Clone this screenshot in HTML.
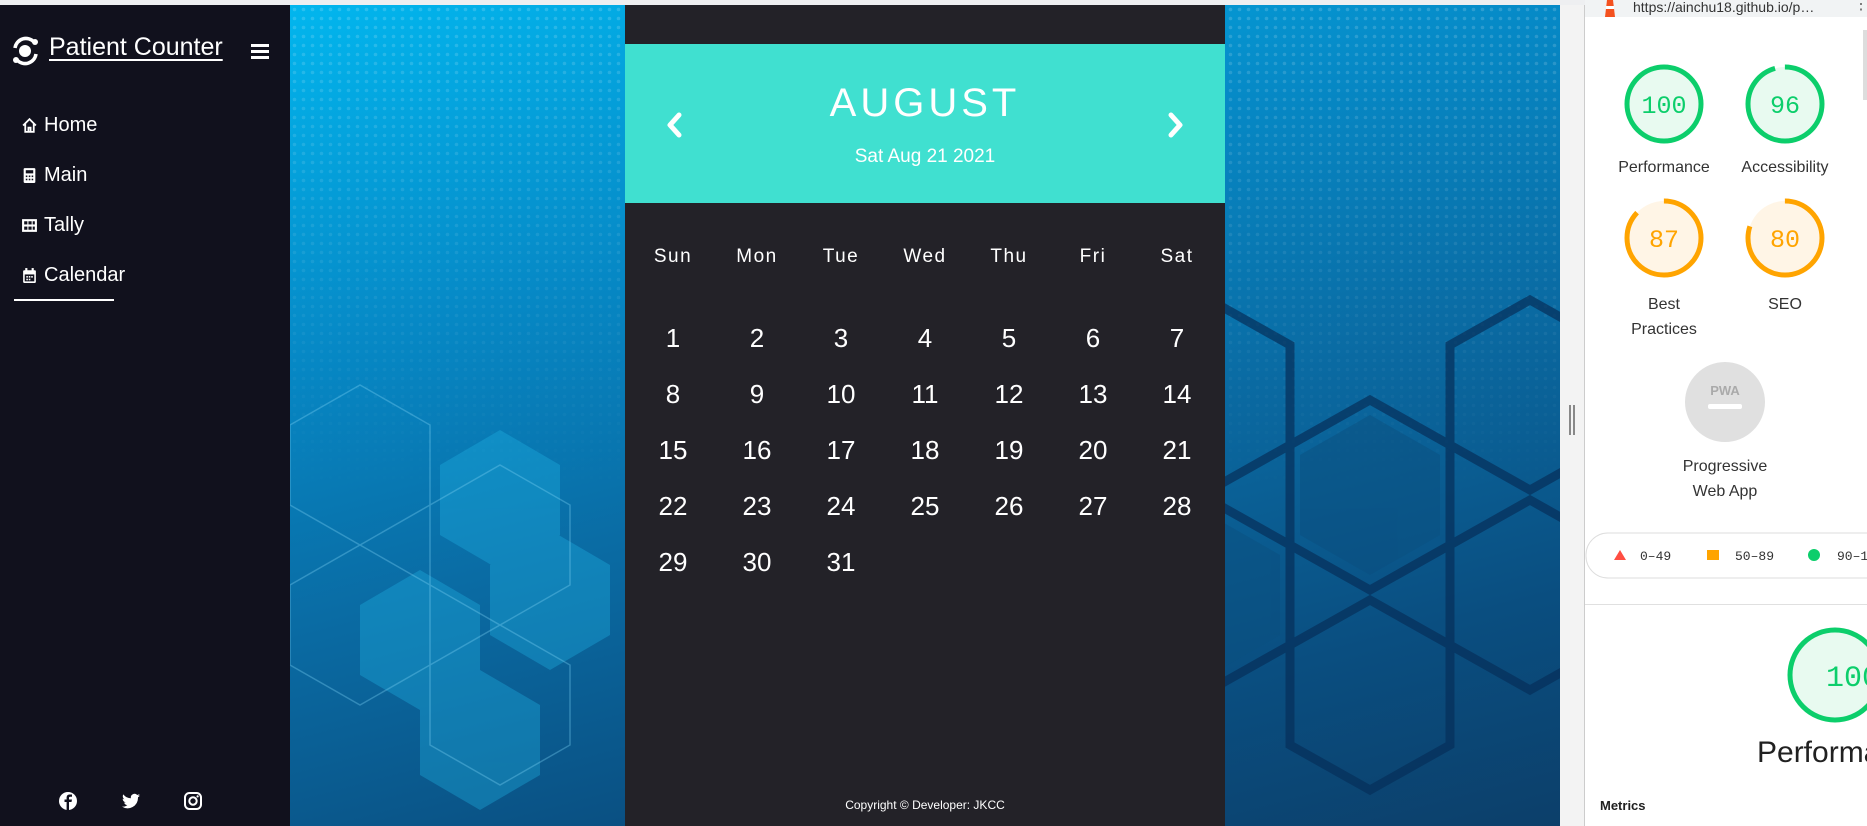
<!DOCTYPE html>
<html><head><meta charset="utf-8"><style>
*{margin:0;padding:0;box-sizing:border-box}
body{width:1867px;height:826px;overflow:hidden;position:relative;background:#fff;font-family:"Liberation Sans",sans-serif}
#top{position:absolute;left:0;top:0;width:1585px;height:5px;background:#eeeff1}
#side{position:absolute;left:0;top:5px;width:290px;height:821px;background:#11111d;color:#fff}
.logo{position:absolute;left:10px;top:30px}
.title{position:absolute;left:49px;top:28px;font-size:25px;text-decoration:underline;text-underline-offset:4px}
.ham{position:absolute;left:251px;top:39px;width:18px}
.ham i{display:block;height:3px;background:#fff;margin-bottom:3px}
.nav{position:absolute;left:21px;font-size:20px;display:flex;align-items:center;gap:6px}
.nav svg{width:17px;height:17px}
.uline{position:absolute;left:14px;top:294px;width:100px;height:2px;background:#fff}
.soc{position:absolute;top:786px;width:20px;height:20px}
#bg{position:absolute;left:290px;top:5px;width:1270px;height:821px;background:linear-gradient(165deg,#02b6ee 0%,#0689c6 30%,#0a6aa2 55%,#0a4e80 80%,#0c3f6a 100%);overflow:hidden}
#cal{position:absolute;left:625px;top:5px;width:600px;height:821px;background:#232228;color:#fff;font-family:"Liberation Sans",sans-serif}
#head{position:absolute;left:0;top:39px;width:600px;height:159px;background:#40e0d0;text-align:center}
.month{position:absolute;left:0;right:0;top:37px;font-size:40px;letter-spacing:4px;font-weight:normal}
.date{position:absolute;left:0;right:0;top:102px;font-size:19px}
.arr{position:absolute;top:66px;width:24px;height:30px}
.grid{position:absolute;left:6px;width:588px;display:grid;grid-template-columns:repeat(7,84px);text-align:center}
.dow{top:241px;font-size:19px;letter-spacing:1.5px}
.days{top:320px;font-size:26px;row-gap:29px;line-height:27px}
.copy{position:absolute;left:0;right:0;top:793px;text-align:center;font-size:12px}
#split{position:absolute;left:1560px;top:5px;width:25px;height:821px;background:#f3f3f3;border-right:1px solid #ccc}
#split i{position:absolute;top:400px;width:2px;height:30px;background:#888}
#dev{position:absolute;left:1585px;top:0;width:282px;height:826px;background:#fff;color:#212121}
#devbar{position:absolute;left:0;top:0;width:282px;height:17px;background:#f1f3f4;font-size:14px;color:#333}
.lbl{position:absolute;font-size:16px;text-align:center;width:140px;line-height:25px;color:#333}
</style></head><body>
<div id="top"></div>
<div id="side">
<svg class="logo" width="32" height="32" viewBox="0 0 32 32"><circle cx="15" cy="16" r="6" fill="#fff"/><path d="M5 13 A11 11 0 0 1 24 7" stroke="#fff" stroke-width="3.5" fill="none"/><path d="M26 19 A11 11 0 0 1 7 25" stroke="#fff" stroke-width="3.5" fill="none"/><circle cx="25" cy="7" r="3" fill="#fff"/><circle cx="6" cy="25" r="3" fill="#fff"/></svg>
<div class="title">Patient Counter</div>
<div class="ham"><i></i><i></i><i></i></div>
<div class="nav" style="top:109px"><svg viewBox="0 0 16 16"><path d="M2 8 L8 2 L14 8 M4 6.5 V14 H12 V6.5 M7 14 V10 H9 V14" stroke="#fff" stroke-width="1.7" fill="none"/></svg>Home</div>
<div class="nav" style="top:159px"><svg viewBox="0 0 16 16"><rect x="2.5" y="1" width="11" height="14" rx="1" fill="#fff"/><rect x="4.5" y="3" width="7" height="3" fill="#11111d"/><g fill="#11111d"><rect x="4.5" y="8" width="1.5" height="1.5"/><rect x="7.3" y="8" width="1.5" height="1.5"/><rect x="10" y="8" width="1.5" height="1.5"/><rect x="4.5" y="11" width="1.5" height="1.5"/><rect x="7.3" y="11" width="1.5" height="1.5"/><rect x="10" y="11" width="1.5" height="1.5"/></g></svg>Main</div>
<div class="nav" style="top:209px"><svg viewBox="0 0 16 16"><rect x="1" y="2" width="14" height="12" fill="#fff"/><g fill="#11111d"><rect x="3" y="4" width="3" height="3"/><rect x="7" y="4" width="3" height="3"/><rect x="11" y="4" width="2" height="3"/><rect x="3" y="9" width="3" height="3"/><rect x="7" y="9" width="3" height="3"/><rect x="11" y="9" width="2" height="3"/></g></svg>Tally</div>
<div class="nav" style="top:259px"><svg viewBox="0 0 16 16"><rect x="2" y="3" width="12" height="12" rx="1" fill="#fff"/><rect x="4" y="1" width="2" height="3" fill="#fff"/><rect x="10" y="1" width="2" height="3" fill="#fff"/><rect x="3.5" y="7" width="9" height="6.5" fill="#11111d"/><g fill="#fff"><rect x="5" y="8.5" width="1.5" height="1.5"/><rect x="7.3" y="8.5" width="1.5" height="1.5"/><rect x="9.6" y="8.5" width="1.5" height="1.5"/><rect x="5" y="11" width="1.5" height="1.5"/><rect x="7.3" y="11" width="1.5" height="1.5"/></g></svg>Calendar</div>
<div class="uline"></div>
<svg class="soc" style="left:58px" viewBox="0 0 20 20"><circle cx="10" cy="10" r="9" fill="#fff"/><path d="M11 19 V11 H13.5 L14 8.5 H11 V7 C11 6 11.5 5.7 12.3 5.7 H14 V3.5 H11.8 C9.5 3.5 8.6 4.8 8.6 7 V8.5 H6.5 V11 H8.6 V19Z" fill="#11111d"/></svg>
<svg class="soc" style="left:121px" viewBox="0 0 20 20"><path d="M19 4.5c-.7.3-1.4.5-2.1.6.8-.5 1.3-1.2 1.6-2-.7.4-1.5.7-2.3.9A3.7 3.7 0 0 0 9.9 7.3 10.4 10.4 0 0 1 2.3 3.4a3.7 3.7 0 0 0 1.1 4.9c-.6 0-1.2-.2-1.7-.5 0 1.800 1.3 3.300 3 3.600-.5.2-1.1.2-1.7.1.5 1.5 1.8 2.5 3.4 2.6A7.4 7.4 0 0 1 1 15.6 10.4 10.4 0 0 0 17 6.8v-.5c.8-.5 1.5-1.1 2-1.8z" fill="#fff"/></svg>
<svg class="soc" style="left:183px" viewBox="0 0 20 20"><rect x="2" y="2" width="16" height="16" rx="4.5" stroke="#fff" stroke-width="2" fill="none"/><circle cx="10" cy="10" r="3.7" stroke="#fff" stroke-width="2" fill="none"/><circle cx="14.6" cy="5.4" r="1.1" fill="#fff"/></svg>
</div>
<div id="bg">
<svg width="1270" height="821" viewBox="0 0 1270 821">
<defs><pattern id="dots" width="9" height="9" patternUnits="userSpaceOnUse"><circle cx="4.5" cy="4.5" r="1.8" fill="#ffffff" opacity="0.16"/></pattern>
<linearGradient id="fd" x1="0" y1="0" x2="0" y2="1"><stop offset="0" stop-color="#fff" stop-opacity="1"/><stop offset="0.6" stop-color="#fff" stop-opacity="0"/></linearGradient>
<mask id="m"><rect width="1270" height="821" fill="url(#fd)"/></mask></defs>
<rect x="0" y="0" width="1270" height="500" fill="url(#dots)" mask="url(#m)"/>
<g fill="#20b4e6" opacity="0.35"><polygon points="150,460 210,425 270,460 270,530 210,565 150,530"/><polygon points="70,600 130,565 190,600 190,670 130,705 70,670"/><polygon points="130,700 190,665 250,700 250,770 190,805 130,770"/><polygon points="200,560 260,525 320,560 320,630 260,665 200,630"/></g>
<g fill="none" stroke="#7fd3f5" stroke-width="1.5" opacity="0.35"><polygon points="0,420 70,380 140,420 140,500 70,540 0,500"/><polygon points="140,500 210,460 280,500 280,580 210,620 140,580"/><polygon points="0,580 70,540 140,580 140,660 70,700 0,660"/><polygon points="140,660 210,620 280,660 280,740 210,780 140,740"/></g>
<g fill="none" stroke="#062f5a" stroke-width="9" opacity="0.7"><polygon points="840,340 920,295 1000,340 1000,440 920,485 840,440"/><polygon points="1000,440 1080,395 1160,440 1160,540 1080,585 1000,540"/><polygon points="840,540 920,495 1000,540 1000,640 920,685 840,640"/><polygon points="1000,640 1080,595 1160,640 1160,740 1080,785 1000,740"/><polygon points="1160,340 1240,295 1320,340 1320,440 1240,485 1160,440"/><polygon points="1160,540 1240,495 1320,540 1320,640 1240,685 1160,640"/></g>
<g fill="#0a4f80" opacity="0.5"><polygon points="1010,450 1080,410 1150,450 1150,530 1080,570 1010,530"/><polygon points="850,550 920,510 990,550 990,630 920,670 850,630"/></g>
</svg>
</div>
<div id="cal">
<div id="head">
<svg class="arr" style="left:38px" viewBox="0 0 24 30"><path d="M16 5 L7 15 L16 25" stroke="#fff" stroke-width="5" fill="none" stroke-linecap="round" stroke-linejoin="round"/></svg>
<div class="month">AUGUST</div>
<div class="date">Sat Aug 21 2021</div>
<svg class="arr" style="left:538px" viewBox="0 0 24 30"><path d="M8 5 L17 15 L8 25" stroke="#fff" stroke-width="5" fill="none" stroke-linecap="round" stroke-linejoin="round"/></svg>
</div>
<div class="grid dow"><div>Sun</div><div>Mon</div><div>Tue</div><div>Wed</div><div>Thu</div><div>Fri</div><div>Sat</div></div>
<div class="grid days">
<div>1</div><div>2</div><div>3</div><div>4</div><div>5</div><div>6</div><div>7</div>
<div>8</div><div>9</div><div>10</div><div>11</div><div>12</div><div>13</div><div>14</div>
<div>15</div><div>16</div><div>17</div><div>18</div><div>19</div><div>20</div><div>21</div>
<div>22</div><div>23</div><div>24</div><div>25</div><div>26</div><div>27</div><div>28</div>
<div>29</div><div>30</div><div>31</div></div>
<div class="copy">Copyright © Developer: JKCC</div>
</div>
<div id="split"><i style="left:9px"></i><i style="left:13px"></i></div>
<div id="dev">
<div id="devbar"><svg style="position:absolute;left:17px;top:0" width="16" height="17" viewBox="0 0 16 17"><path d="M5 0 H11 L13 17 H3Z" fill="#f4511e"/><rect x="4" y="6" width="8" height="3" fill="#fff"/></svg><span style="position:absolute;left:48px;top:-1px">https://ainchu18.github.io/p…</span><span style="position:absolute;left:268px;top:-6px;font-size:16px;color:#666">⋮</span></div>
<svg style="position:absolute;left:0;top:17px" width="282" height="809" viewBox="0 0 282 809">
<g font-family="Liberation Mono,monospace" font-size="25" text-anchor="middle">
<circle cx="79" cy="87" r="37" fill="#e8faf0" stroke="#0cce6b" stroke-width="5"/><text x="79" y="96" fill="#0cce6b">100</text>
<circle cx="200" cy="87" r="37" fill="#e8faf0" stroke="#0cce6b" stroke-width="5" stroke-dasharray="222 10" transform="rotate(-90 200 87)"/><text x="200" y="96" fill="#0cce6b">96</text>
<circle cx="79" cy="221" r="37" fill="#fff5e6"/><circle cx="79" cy="221" r="37" fill="none" stroke="#ffa400" stroke-width="5" stroke-dasharray="202 30" transform="rotate(-90 79 221)"/><text x="79" y="230" fill="#ffa400">87</text>
<circle cx="200" cy="221" r="37" fill="#fff5e6"/><circle cx="200" cy="221" r="37" fill="none" stroke="#ffa400" stroke-width="5" stroke-dasharray="186 46" transform="rotate(-90 200 221)"/><text x="200" y="230" fill="#ffa400">80</text>
<circle cx="140" cy="385" r="40" fill="#e0e0e0"/><text x="140" y="378" font-size="13" font-weight="bold" fill="#aaa" font-family="Liberation Sans">PWA</text><rect x="123" y="387" width="34" height="5" rx="2" fill="#fff"/>
<circle cx="250" cy="658" r="45" fill="#e8faf0" stroke="#0cce6b" stroke-width="5"/><text x="268" y="669" font-size="30" fill="#0cce6b">100</text>
</g>
<g font-family="Liberation Mono,monospace" font-size="13" fill="#333">
<rect x="1" y="516" width="320" height="45" rx="22" fill="none" stroke="#ddd"/>
<polygon points="29,543 35,533 41,543" fill="#ff4e42"/><text x="55" y="543">0–49</text>
<rect x="122" y="533" width="12" height="10" fill="#ffa400"/><text x="150" y="543">50–89</text>
<circle cx="229" cy="538" r="6" fill="#0cce6b"/><text x="252" y="543">90–100</text></g>
<rect x="0" y="587" width="282" height="1" fill="#e0e0e0"/>
<text x="172" y="745" font-family="Liberation Sans" font-size="30" fill="#212121">Performance</text>
<text x="15" y="793" font-family="Liberation Sans" font-size="13" font-weight="bold" fill="#212121">Metrics</text>
</svg>
<div class="lbl" style="left:9px;top:155px">Performance</div>
<div class="lbl" style="left:130px;top:155px">Accessibility</div>
<div class="lbl" style="left:9px;top:292px">Best<br>Practices</div>
<div class="lbl" style="left:130px;top:292px">SEO</div>
<div class="lbl" style="left:70px;top:454px">Progressive<br>Web App</div>
<div style="position:absolute;right:0;top:30px;width:4px;height:70px;background:#ddd"></div>
</div>
</body></html>
